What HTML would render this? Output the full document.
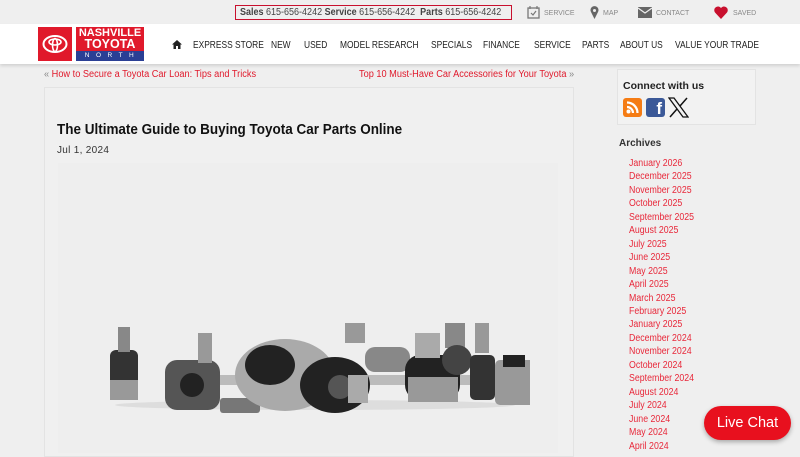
<!DOCTYPE html>
<html><head><style>
*{margin:0;padding:0;box-sizing:border-box}
body{width:800px;height:450px;overflow:hidden;background:#efefef;font-family:"Liberation Sans",sans-serif;position:relative}
.a{position:absolute;white-space:nowrap}
.sx{transform-origin:0 0}
.top{font-size:10px;color:#444;transform:scaleX(.9)}
.nav{font-size:10.5px;color:#222;top:39px;transform:scaleX(.8);transform-origin:0 0}
.red{color:#e0192b}
.arch{font-size:10px;color:#e8283a;left:629px;transform:scaleX(.88);transform-origin:0 0}
.sm{font-size:7px;color:#888}
</style></head><body>
<div class="a" style="left:235px;top:5px;width:277px;height:15px;border:1.5px solid #c8102e;"></div>
<div class="a top sx" style="left:240px;top:7px"><b>Sales</b> 615-656-4242 <b>Service</b> 615-656-4242 &nbsp;<b>Parts</b> 615-656-4242</div>
<svg class="a" style="left:527px;top:6px" width="13" height="13" viewBox="0 0 13 13"><rect x="1" y="2" width="11" height="10" fill="none" stroke="#777" stroke-width="1.3"/><path d="M3 0v3M10 0v3M4 7l2 2 3-4" stroke="#777" fill="none" stroke-width="1.2"/></svg>
<div class="a sm" style="left:544px;top:10px">SERVICE</div>
<svg class="a" style="left:590px;top:6px" width="9" height="13" viewBox="0 0 9 13"><path d="M4.5 13L1 6a4 4 0 1 1 7 0z" fill="#666"/><circle cx="4.5" cy="4.5" r="1.5" fill="#efefef"/></svg>
<div class="a sm" style="left:603px;top:10px">MAP</div>
<svg class="a" style="left:638px;top:7px" width="14" height="11"><rect width="14" height="11" fill="#666"/><path d="M0 1l7 5 7-5" stroke="#efefef" fill="none" stroke-width="1.2"/></svg>
<div class="a sm" style="left:656px;top:10px">CONTACT</div>
<svg class="a" style="left:714px;top:6px" width="14" height="13" viewBox="0 0 14 13"><path d="M7 13L1 6.5A3.5 3.5 0 0 1 7 2a3.5 3.5 0 0 1 6 4.5z" fill="#c8102e"/></svg>
<div class="a sm" style="left:733px;top:10px">SAVED</div>
<div class="a" style="left:0;top:24px;width:800px;height:40px;background:#fff;box-shadow:0 2px 3px rgba(0,0,0,.12)"></div>
<div class="a" style="left:38px;top:27px;width:34px;height:34px;background:#e0192b"></div>
<svg class="a" style="left:42px;top:34px" width="26" height="20" viewBox="0 0 26 20"><ellipse cx="13" cy="10" rx="11.5" ry="8" fill="none" stroke="#fff" stroke-width="2"/><ellipse cx="13" cy="8" rx="6" ry="3" fill="none" stroke="#fff" stroke-width="1.6"/><ellipse cx="13" cy="11" rx="2.5" ry="6.5" fill="none" stroke="#fff" stroke-width="1.6"/></svg>
<div class="a" style="left:76px;top:27px;width:68px;height:24px;background:#e0192b"></div>
<div class="a" style="left:76px;top:28px;width:68px;text-align:center;color:#fff;font-weight:bold;font-size:11px;line-height:10.5px">NASHVILLE<br><span style="font-size:12.5px">TOYOTA</span></div>
<div class="a" style="left:76px;top:51px;width:68px;height:10px;background:#2a3f95;color:#fff;font-size:6.5px;letter-spacing:6.5px;text-align:center;padding-left:5px;line-height:10px">NORTH</div>
<svg class="a" style="left:172px;top:40px" width="10" height="9" viewBox="0 0 10 9"><path d="M5 0L0 4.5h1.5V9h2.5V6h2v3h2.5V4.5H10z" fill="#222"/></svg>
<div class="a nav" style="left:193px">EXPRESS STORE</div>
<div class="a nav" style="left:271px">NEW</div>
<div class="a nav" style="left:304px">USED</div>
<div class="a nav" style="left:340px">MODEL RESEARCH</div>
<div class="a nav" style="left:431px">SPECIALS</div>
<div class="a nav" style="left:483px">FINANCE</div>
<div class="a nav" style="left:534px">SERVICE</div>
<div class="a nav" style="left:582px">PARTS</div>
<div class="a nav" style="left:620px">ABOUT US</div>
<div class="a nav" style="left:675px">VALUE YOUR TRADE</div>
<div class="a sx" style="left:44px;top:69px;font-size:10px;color:#888;transform:scaleX(.92)">« <span class="red">How to Secure a Toyota Car Loan: Tips and Tricks</span></div>
<div class="a sx" style="left:359px;top:69px;font-size:10px;color:#888;transform:scaleX(.92)"><span class="red">Top 10 Must-Have Car Accessories for Your Toyota</span> »</div>
<div class="a" style="left:44px;top:87px;width:530px;height:370px;background:#f0f0f0;border:1px solid #e3e3e3"></div>
<div class="a sx" style="left:57px;top:122px;font-size:14.5px;font-weight:bold;color:#111;transform:scaleX(.93)">The Ultimate Guide to Buying Toyota Car Parts Online</div>
<div class="a" style="left:57px;top:145px;font-size:10px;color:#333;letter-spacing:.3px">Jul 1, 2024</div>
<div class="a" style="left:58px;top:163px;width:500px;height:290px;background:#eeeeee"></div>
<svg class="a" style="left:100px;top:315px" width="430" height="100" viewBox="0 0 430 100">
<ellipse cx="215" cy="90" rx="200" ry="5" fill="#ddd"/>
<rect x="80" y="60" width="300" height="10" fill="#bbb"/>
<rect x="10" y="35" width="28" height="50" rx="6" fill="#333"/><rect x="10" y="65" width="28" height="20" fill="#999"/><rect x="18" y="12" width="12" height="25" fill="#888"/>
<rect x="65" y="45" width="55" height="50" rx="12" fill="#555"/><circle cx="92" cy="70" r="12" fill="#222"/>
<rect x="98" y="18" width="14" height="30" fill="#999"/>
<rect x="120" y="83" width="40" height="15" rx="3" fill="#777"/>
<ellipse cx="185" cy="60" rx="50" ry="36" fill="#aaa"/><ellipse cx="170" cy="50" rx="25" ry="20" fill="#222"/>
<ellipse cx="235" cy="70" rx="35" ry="28" fill="#222"/><circle cx="240" cy="72" r="12" fill="#555"/>
<rect x="245" y="8" width="20" height="20" fill="#999"/><rect x="265" y="32" width="45" height="25" rx="10" fill="#888"/><rect x="248" y="60" width="20" height="28" fill="#aaa"/>
<rect x="305" y="40" width="55" height="45" rx="15" fill="#222"/><rect x="315" y="18" width="25" height="25" fill="#aaa"/><rect x="308" y="62" width="50" height="25" fill="#999"/>
<rect x="345" y="8" width="20" height="25" fill="#888"/><circle cx="357" cy="45" r="15" fill="#444"/>
<rect x="370" y="40" width="25" height="45" rx="5" fill="#333"/><rect x="375" y="8" width="14" height="30" fill="#999"/>
<rect x="395" y="45" width="40" height="45" rx="5" fill="#999"/><rect x="403" y="40" width="22" height="12" fill="#222"/>
</svg>
<div class="a" style="left:617px;top:69px;width:139px;height:56px;background:#f2f2f2;border:1px solid #e3e3e3"></div>
<div class="a" style="left:623px;top:80px;font-size:10.5px;font-weight:bold;color:#222">Connect with us</div>
<div class="a" style="left:623px;top:98px;width:19px;height:19px;background:#f57c14;border-radius:3px"></div>
<svg class="a" style="left:626px;top:101px" width="13" height="13"><circle cx="2.5" cy="10.5" r="2" fill="#fff"/><path d="M1 6a6 6 0 0 1 6 6M1 1.5a10.5 10.5 0 0 1 10.5 10.5" stroke="#fff" stroke-width="2.2" fill="none"/></svg>
<div class="a" style="left:646px;top:98px;width:19px;height:19px;background:#3b5998;border-radius:3px;color:#fff;font-weight:bold;font-size:17px;text-align:right;padding-right:3px;line-height:22px;overflow:hidden">f</div>
<svg class="a" style="left:668px;top:97px" width="21" height="21" viewBox="0 0 21 21"><path d="M1 1h5l14 19h-5z" fill="none" stroke="#111" stroke-width="1.3"/><path d="M19 1L12 9M2 20l7-8" stroke="#111" stroke-width="1.5"/></svg>
<div class="a" style="left:619px;top:138px;font-size:10px;font-weight:bold;color:#333">Archives</div>
<div class="a arch" style="top:157px;line-height:13.45px;white-space:pre">January 2026
December 2025
November 2025
October 2025
September 2025
August 2025
July 2025
June 2025
May 2025
April 2025
March 2025
February 2025
January 2025
December 2024
November 2024
October 2024
September 2024
August 2024
July 2024
June 2024
May 2024
April 2024</div>
<div class="a" style="left:704px;top:406px;width:87px;height:34px;border-radius:17px;background:#e8101e;color:#fff;font-size:14.5px;text-align:center;line-height:34px;box-shadow:0 2px 5px rgba(0,0,0,.3)">Live Chat</div>
</body></html>
